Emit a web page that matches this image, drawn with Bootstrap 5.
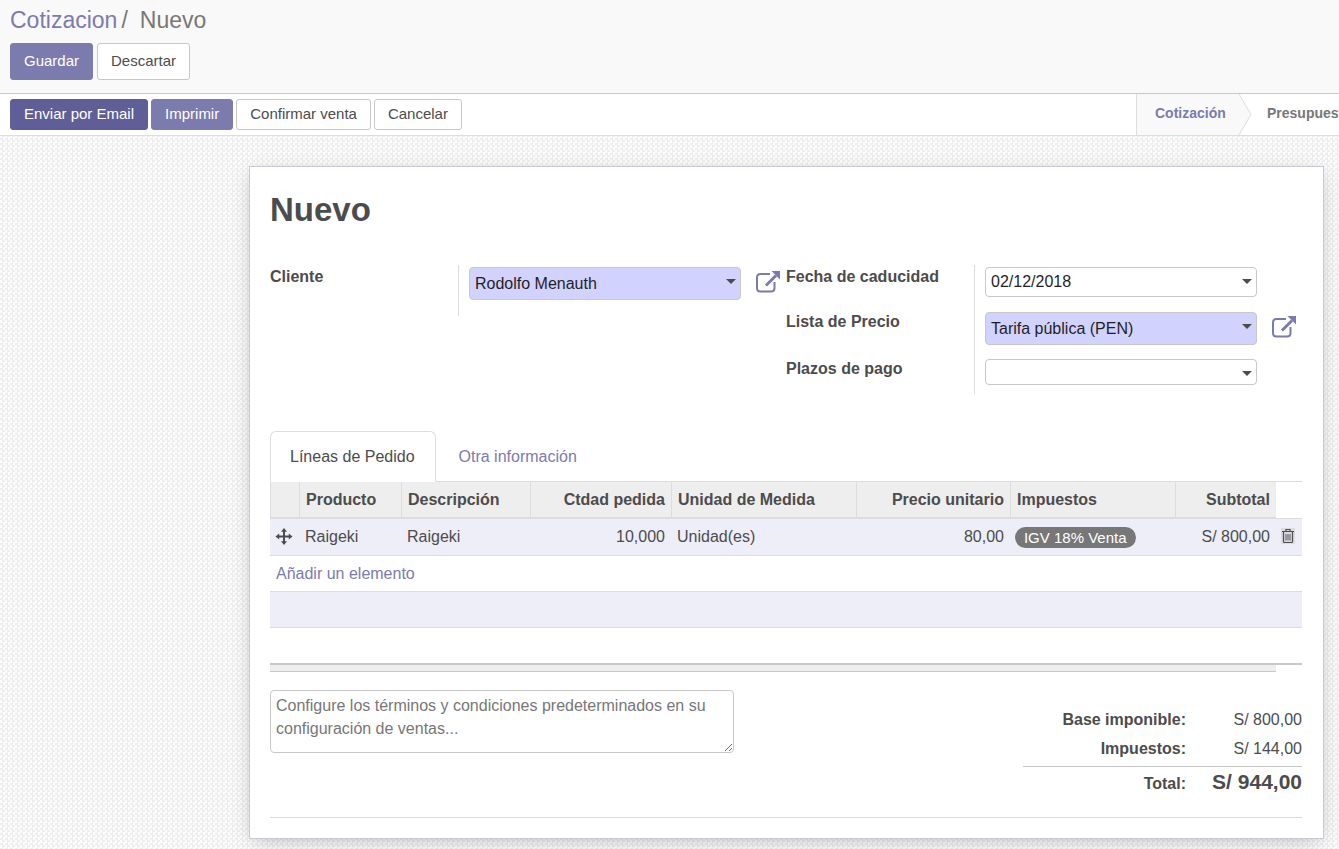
<!DOCTYPE html>
<html lang="es">
<head>
<meta charset="utf-8">
<meta name="viewport" content="width=device-width, initial-scale=1">
<title>Cotizacion / Nuevo</title>
<link href="https://cdn.jsdelivr.net/npm/bootstrap@5.3.0/dist/css/bootstrap.min.css" rel="stylesheet">
<style>
  :root { --brand: #7c7bad; --ink: #4c4c4c; --line: #ddd; --edge: #c8c8d3; }
  body {
    font: 16px/23px "Liberation Sans", Arial, sans-serif; color: var(--ink);
    background: repeating-conic-gradient(#eee 0 25%, #fcfcfc 0 50%) 0 0 / 5px 5px;
  }
  a { color: var(--brand); text-decoration: none; }
  .control-panel { background: #f9f9f9; border-bottom: 1px solid #c8c8c8; padding: 5px 10px 13px; }
  .breadcrumb { font-size: 23px; line-height: 30px; margin-bottom: 8px; --bs-breadcrumb-divider-color: #777; }
  .breadcrumb-item.active { color: #777; }
  .breadcrumb-item + .breadcrumb-item { padding-left: 4px; }
  .breadcrumb-item + .breadcrumb-item::before { padding-right: 12px; color: #777; }
  .btn { font-size: 15px; line-height: 21px; padding: 3px 13px 5px; border-radius: 3px; white-space: nowrap; }
  .btn-tall { padding: 6px 13px 8px; }
  .btn-brand { --bs-btn-color: #fff; --bs-btn-bg: #7c7bad; --bs-btn-border-color: #7c7bad; --bs-btn-hover-color: #fff; --bs-btn-hover-bg: #5f5e97; }
  .btn-deep { --bs-btn-color: #fff; --bs-btn-bg: #5f5e97; --bs-btn-border-color: #5f5e97; --bs-btn-hover-color: #fff; --bs-btn-hover-bg: #4d4c80; }
  .btn-plain { --bs-btn-color: #4c4c4c; --bs-btn-bg: #fff; --bs-btn-border-color: #c8c8c8; --bs-btn-hover-bg: #eee; }
  .status-row { background: #fff; border-bottom: 1px solid var(--line); }
  .status-actions { padding: 5px 10px; gap: 3px; }
  .stages { flex: 0 0 203px; overflow: hidden; border-left: 1px solid var(--line); font-size: 14px; font-weight: 700; white-space: nowrap; }
  .stages span { padding-bottom: 2px; }
  .stage-now { background: #f9f9f9; color: var(--brand); padding-left: 18px; width: 101px; flex: none; }
  .stage-next { color: #777; padding-left: 15px; }
  .stage-arrow { width: 14px; height: 41px; flex: none; }
  .sheet { background: #fff; border: 1px solid var(--edge); box-shadow: 0 5px 20px -5px rgba(0,0,0,.26); margin: 30px 15px 10px 249px; padding: 20px 21px 20px 20px; }
  .sheet h1 { font-size: 33px; line-height: 44px; font-weight: 700; margin: 0; padding: 1px 0 33px; }
  .pairs { display: grid; grid-template-columns: 189px 1fr; font-weight: 700; align-content: start; }
  .pairs-one { grid-template-rows: 51px; }
  .pairs-three { grid-template-rows: 45px 47px 37px; }
  .entry { border-left: 1px solid var(--line); margin-left: -1px; padding: 2px 0 0 10px; display: flex; align-items: flex-start; gap: 15px; }
  .pick {
    flex: 0 1 272px; min-width: 0; height: 30px; padding: 0 20px 0 5px; border: 1px solid #c8c8c8; border-radius: 4px;
    color: #1f1f1f; font-size: 16px; line-height: 23px; appearance: none;
    background: #fff url("data:image/svg+xml,%3Csvg xmlns='http://www.w3.org/2000/svg' width='10' height='5'%3E%3Cpath d='M0 0h10L5 5z' fill='%234c4c4c'/%3E%3C/svg%3E") no-repeat right 4px top 11px;
  }
  .pick-needed { background-color: #d2d2ff; height: 33px; }
  .pick-short { height: 26px; }
  .open-link { width: 25px; height: 25px; margin-top: 2px; flex: none; display: block; }
  .open-link svg, .stage-arrow { display: block; }
  .nav-tabs { --bs-nav-tabs-border-color: #ddd; margin-top: 37px; }
  .nav-tabs .nav-link { color: var(--brand); padding: 13px 20px 13px 19px; line-height: 23px; margin-right: 3px; }
  .nav-tabs .nav-link.active { color: var(--ink); border-color: #ddd #ddd #fff; }
  .lines { width: 100%; table-layout: fixed; border-collapse: separate; border-spacing: 0; }
  .lines th, .lines td { padding: 0 6px; height: 36px; white-space: nowrap; }
  .lines thead th { background: #eee; border-left: 1px solid var(--line); border-bottom: 2px solid var(--line); height: 37px; }
  .lines thead td { border-bottom: 1px solid var(--line); }
  .lines tbody td { border-bottom: 1px solid var(--line); }
  .lines tbody tr:nth-child(odd) td { background: #eeeef8; }
  .lines tbody tr:first-child td { height: 37px; padding-bottom: 2px; }
  .lines tbody tr:last-child td { height: 37px; border-bottom: 2px solid #c8c8c8; }
  .lines tfoot td { height: 7px; line-height: 0; padding: 0; }
  .lines tfoot .foot-fill { background: #eee; border-bottom: 1px solid #c8c8c8; }
  .lines .tool { padding: 0 5px; }
  .tool button { border: 0; background: none; padding: 0; display: block; }
  .tax { background: #777; color: #fff; border-radius: 11px; font-size: 15px; line-height: 21px; padding: 0 9px; display: inline-block; vertical-align: middle; margin-left: -1px; }
  .closing { border-bottom: 1px solid var(--line); margin-top: 18px; min-height: 128px; }
  .terms { width: 45%; height: 63px; padding: 3px 5px; border: 1px solid #c8c8c8; border-radius: 4px; line-height: 23px; resize: both; color: var(--ink); }
  .terms::placeholder { color: #777; opacity: 1; }
  .totals { margin-top: 15px; width: 279px; }
  .totals th, .totals td { padding: 3px 0; text-align: right; vertical-align: baseline; }
  .totals th { width: 163px; }
  .totals .sum > * { border-top: 1px solid #c8c8c8; padding-top: 3px; }
  .totals .sum td { font-size: 21px; font-weight: 700; }
  .totals .before-sum > * { padding-bottom: 6px; }
</style>
</head>
<body>
<header class="control-panel">
  <nav aria-label="Ruta">
    <ol class="breadcrumb">
      <li class="breadcrumb-item"><a href="#">Cotizacion</a></li>
      <li class="breadcrumb-item active" aria-current="page">Nuevo</li>
    </ol>
  </nav>
  <div class="d-flex gap-1">
    <button type="button" class="btn btn-tall btn-brand">Guardar</button>
    <button type="button" class="btn btn-tall btn-plain">Descartar</button>
  </div>
</header>
<div class="status-row d-flex justify-content-between">
  <div class="status-actions d-flex">
    <button type="button" class="btn btn-deep">Enviar por Email</button>
    <button type="button" class="btn btn-brand">Imprimir</button>
    <button type="button" class="btn btn-plain">Confirmar venta</button>
    <button type="button" class="btn btn-plain">Cancelar</button>
  </div>
  <div class="stages d-flex align-items-stretch">
    <span class="stage-now d-flex align-items-center">Cotización</span>
    <svg class="stage-arrow" viewBox="0 0 14 41" aria-hidden="true"><path d="M0 0h1l12 20.500L1 41H0z" fill="#f9f9f9"/><path d="M1 0l12 20.500L1 41" fill="none" stroke="#ddd"/></svg>
    <span class="stage-next d-flex align-items-center">Presupuesto</span>
  </div>
</div>
<main class="sheet">
  <h1>Nuevo</h1>
  <form>
    <div class="row g-0">
      <div class="col-6 pairs pairs-one">
        <label for="cliente">Cliente</label>
        <div class="entry">
          <select id="cliente" class="pick pick-needed"><option>Rodolfo Menauth</option></select>
          <a class="open-link" href="#" aria-label="Abrir cliente"><svg width="25" height="25" viewBox="0 0 25 25"><path d="M14 5H4.500Q1 5 1 8.500V19q0 3.500 3.500 3.500H15q3.500 0 3.500-3.500v-6" fill="none" stroke="#7c7bad" stroke-width="2"/><path d="M10 16.500L20 6.500" stroke="#7c7bad" stroke-width="3"/><path d="M15.500 2H24V10.500z" fill="#7c7bad"/></svg></a>
        </div>
      </div>
      <div class="col-6 pairs pairs-three">
        <label for="fecha">Fecha de caducidad</label>
        <div class="entry"><input id="fecha" type="text" class="pick" value="02/12/2018"></div>
        <label for="tarifa">Lista de Precio</label>
        <div class="entry">
          <select id="tarifa" class="pick pick-needed"><option>Tarifa pública (PEN)</option></select>
          <a class="open-link" href="#" aria-label="Abrir tarifa"><svg width="25" height="25" viewBox="0 0 25 25"><path d="M14 5H4.500Q1 5 1 8.500V19q0 3.500 3.500 3.500H15q3.500 0 3.500-3.500v-6" fill="none" stroke="#7c7bad" stroke-width="2"/><path d="M10 16.500L20 6.500" stroke="#7c7bad" stroke-width="3"/><path d="M15.500 2H24V10.500z" fill="#7c7bad"/></svg></a>
        </div>
        <label for="plazos">Plazos de pago</label>
        <div class="entry"><select id="plazos" class="pick pick-short"><option></option></select></div>
      </div>
    </div>

    <ul class="nav nav-tabs">
      <li class="nav-item"><a class="nav-link active" aria-current="page" href="#">Líneas de Pedido</a></li>
      <li class="nav-item"><a class="nav-link" href="#">Otra información</a></li>
    </ul>
    <table class="lines">
      <colgroup>
        <col style="width:2.810%"><col style="width:9.884%"><col style="width:12.500%"><col style="width:13.663%"><col style="width:17.926%"><col style="width:14.922%"><col style="width:15.989%"><col style="width:9.787%"><col style="width:2.519%">
      </colgroup>
      <thead>
        <tr>
          <th></th><th scope="col">Producto</th><th scope="col">Descripción</th><th scope="col" class="text-end">Ctdad pedida</th><th scope="col">Unidad de Medida</th><th scope="col" class="text-end">Precio unitario</th><th scope="col">Impuestos</th><th scope="col" class="text-end">Subtotal</th><td></td>
        </tr>
      </thead>
      <tbody>
        <tr>
          <td class="tool"><svg class="d-block" width="18" height="17" viewBox="0 0 17 17" aria-hidden="true"><path d="M8.500 3v11M3 8.500h11" stroke="#4c4c4c" stroke-width="2"/><path d="M8.500 0l3 3.700h-6zM8.500 17l3-3.700h-6zM0 8.500l3.700-3v6zM17 8.500l-3.700-3v6z" fill="#4c4c4c"/></svg></td>
          <td>Raigeki</td><td>Raigeki</td><td class="text-end">10,000</td><td>Unidad(es)</td><td class="text-end">80,00</td><td><span class="tax">IGV 18% Venta</span></td><td class="text-end">S/ 800,00</td>
          <td class="tool"><button type="button" aria-label="Eliminar"><svg class="d-block" width="14" height="16" viewBox="0 0 14 16"><path d="M0 0h14v16H0z" fill="#dcdcdc"/><path d="M5 3V1.500h4V3M1 3.500h12M2.500 4v9.500q0 1 1 1h7q1 0 1-1V4" fill="none" stroke="#4c4c4c" stroke-width="1.200"/><path d="M5 6v6.500M7 6v6.500M9 6v6.500" stroke="#55556a"/></svg></button></td>
        </tr>
        <tr><td colspan="9"><a href="#">Añadir un elemento</a></td></tr>
        <tr><td colspan="9"></td></tr>
        <tr><td colspan="9"></td></tr>
      </tbody>
      <tfoot><tr><td colspan="8" class="foot-fill"></td><td></td></tr></tfoot>
    </table>

    <div class="closing d-flex justify-content-between align-items-start">
      <textarea class="terms" aria-label="Términos y condiciones" placeholder="Configure los términos y condiciones predeterminados en su configuración de ventas..."></textarea>
      <table class="totals">
        <tbody>
          <tr><th scope="row">Base imponible:</th><td>S/ 800,00</td></tr>
          <tr class="before-sum"><th scope="row">Impuestos:</th><td>S/ 144,00</td></tr>
          <tr class="sum"><th scope="row">Total:</th><td>S/ 944,00</td></tr>
        </tbody>
      </table>
    </div>
  </form>
</main>
<script src="https://cdn.jsdelivr.net/npm/bootstrap@5.3.0/dist/js/bootstrap.bundle.min.js"></script>
</body>
</html>
